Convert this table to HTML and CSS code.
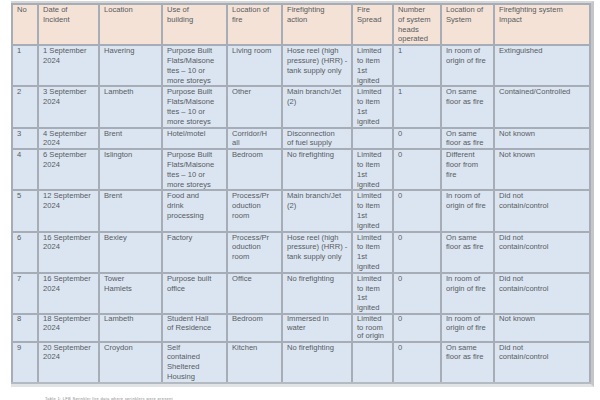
FILE: index.html
```html
<!DOCTYPE html>
<html lang="en">
<head>
<meta charset="utf-8">
<title>Sprinkler incidents</title>
<link rel="stylesheet" href="styles.css">
</head>
<body>
<div class="page">
  <div class="frame">
    <table class="data">
      <colgroup>
        <col class="c-no"><col class="c-date"><col class="c-loc"><col class="c-use"><col class="c-fire">
        <col class="c-act"><col class="c-spread"><col class="c-num"><col class="c-sys"><col class="c-imp">
      </colgroup>
      <thead>
        <tr>
          <th>No</th>
          <th>Date of<br>Incident</th>
          <th>Location</th>
          <th>Use of<br>building</th>
          <th>Location of<br>fire</th>
          <th>Firefighting<br>action</th>
          <th>Fire<br>Spread</th>
          <th>Number<br>of system<br>heads<br>operated</th>
          <th>Location of<br>System</th>
          <th>Firefighting system<br>Impact</th>
        </tr>
      </thead>
      <tbody>
        <tr>
          <td>1</td>
          <td>1 September<br>2024</td>
          <td>Havering</td>
          <td>Purpose Built<br>Flats/Maisone<br>ttes – 10 or<br>more storeys</td>
          <td>Living room</td>
          <td>Hose reel (high<br>pressure) (HRR) -<br>tank supply only</td>
          <td>Limited<br>to item<br>1st<br>ignited</td>
          <td>1</td>
          <td>In room of<br>origin of fire</td>
          <td>Extinguished</td>
        </tr>
        <tr>
          <td>2</td>
          <td>3 September<br>2024</td>
          <td>Lambeth</td>
          <td>Purpose Built<br>Flats/Maisone<br>ttes – 10 or<br>more storeys</td>
          <td>Other</td>
          <td>Main branch/Jet<br>(2)</td>
          <td>Limited<br>to item<br>1st<br>ignited</td>
          <td>1</td>
          <td>On same<br>floor as fire</td>
          <td>Contained/Controlled</td>
        </tr>
        <tr>
          <td>3</td>
          <td>4 September<br>2024</td>
          <td>Brent</td>
          <td>Hotel/motel</td>
          <td>Corridor/H<br>all</td>
          <td>Disconnection<br>of fuel supply</td>
          <td></td>
          <td>0</td>
          <td>On same<br>floor as fire</td>
          <td>Not known</td>
        </tr>
        <tr>
          <td>4</td>
          <td>6 September<br>2024</td>
          <td>Islington</td>
          <td>Purpose Built<br>Flats/Maisone<br>ttes – 10 or<br>more storeys</td>
          <td>Bedroom</td>
          <td>No firefighting</td>
          <td>Limited<br>to item<br>1st<br>ignited</td>
          <td>0</td>
          <td>Different<br>floor from<br>fire</td>
          <td>Not known</td>
        </tr>
        <tr>
          <td>5</td>
          <td>12 September<br>2024</td>
          <td>Brent</td>
          <td>Food and<br>drink<br>processing</td>
          <td>Process/Pr<br>oduction<br>room</td>
          <td>Main branch/Jet<br>(2)</td>
          <td>Limited<br>to item<br>1st<br>ignited</td>
          <td>0</td>
          <td>In room of<br>origin of fire</td>
          <td>Did not<br>contain/control</td>
        </tr>
        <tr>
          <td>6</td>
          <td>16 September<br>2024</td>
          <td>Bexley</td>
          <td>Factory</td>
          <td>Process/Pr<br>oduction<br>room</td>
          <td>Hose reel (high<br>pressure) (HRR) -<br>tank supply only</td>
          <td>Limited<br>to item<br>1st<br>ignited</td>
          <td>0</td>
          <td>On same<br>floor as fire</td>
          <td>Did not<br>contain/control</td>
        </tr>
        <tr>
          <td>7</td>
          <td>16 September<br>2024</td>
          <td>Tower<br>Hamlets</td>
          <td>Purpose built<br>office</td>
          <td>Office</td>
          <td>No firefighting</td>
          <td>Limited<br>to item<br>1st<br>ignited</td>
          <td>0</td>
          <td>In room of<br>origin of fire</td>
          <td>Did not<br>contain/control</td>
        </tr>
        <tr class="short">
          <td>8</td>
          <td>18 September<br>2024</td>
          <td>Lambeth</td>
          <td>Student Hall<br>of Residence</td>
          <td>Bedroom</td>
          <td>Immersed in<br>water</td>
          <td>Limited<br>to room<br>of origin</td>
          <td>0</td>
          <td>In room of<br>origin of fire</td>
          <td>Not known</td>
        </tr>
        <tr>
          <td>9</td>
          <td>20 September<br>2024</td>
          <td>Croydon</td>
          <td>Self<br>contained<br>Sheltered<br>Housing</td>
          <td>Kitchen</td>
          <td>No firefighting</td>
          <td></td>
          <td>0</td>
          <td>On same<br>floor as fire</td>
          <td>Did not<br>contain/control</td>
        </tr>
      </tbody>
    </table>
  </div>
  <p class="caption">Table 1: LFB Sprinkler fire data where sprinklers were present</p>
</div>
</body>
</html>
```
FILE: styles.css
```css
* { box-sizing: border-box; }

html, body {
  margin: 0;
  padding: 0;
  background: #ffffff;
}

.page {
  width: 600px;
  height: 400px;
  padding: 1px 0 0 11px;
  font-family: "Liberation Sans", Arial, sans-serif;
  overflow: hidden;
}

.frame {
  width: 583px;
  border-top: 2px solid #d6d6d6;
  border-right: 3px solid #c4c6c9;
  border-bottom: 3px solid #e2e3e5;
}

.data {
  width: 580px;
  border-collapse: collapse;
  table-layout: fixed;
  font-size: 7.6px;
  line-height: 9.8px;
  color: #575b61;
  border-left: 2px solid #9297a0;
}

.c-no { width: 26px; }
.c-date { width: 61px; }
.c-loc { width: 63px; }
.c-use { width: 65px; }
.c-fire { width: 55px; }
.c-act { width: 70px; }
.c-spread { width: 41px; }
.c-num { width: 48px; }
.c-sys { width: 53px; }
.c-imp { width: 96px; }

.data th,
.data td {
  border: 2px solid #a6adb6;
  padding: 0 1px 0 4px;
  text-align: left;
  vertical-align: top;
  font-weight: normal;
  white-space: nowrap;
  overflow: hidden;
}

.data th {
  background: #f4e2d6;
}

.data td {
  background: #dbe5f1;
}

.data tbody tr:last-child td {
  border-bottom-color: #b4bac2;
}

.short td {
  line-height: 8.6px;
}

.caption {
  margin: 9px 0 0 34px;
  font-size: 4px;
  line-height: 5px;
  color: #8a8a8a;
  letter-spacing: 0.3px;
}
```
